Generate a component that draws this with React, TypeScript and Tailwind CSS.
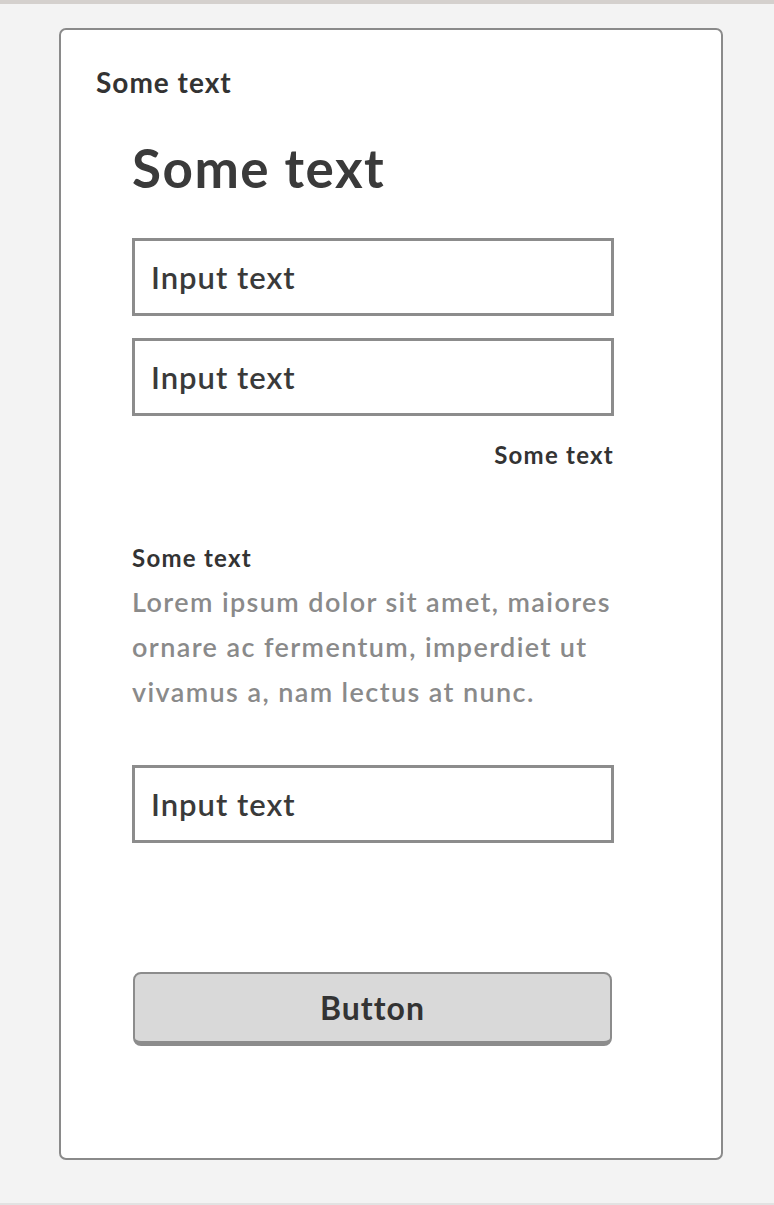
import React from "react";

function InputBox({ className = "" }: { className?: string }) {
  return (
    <div
      className={`h-[78px] w-[482px] border-[3px] border-[#8c8c8c] bg-white flex items-center pl-[16px] ${className}`}
    >
      <span className="text-[31px] font-semibold tracking-[1px] text-[#3a3a3a] leading-none">Input text</span>
    </div>
  );
}

export default function App() {
  return (
    <div className="min-h-[1205px] bg-[#f3f3f3] flex flex-col font-['Lato',sans-serif]">
      <div className="h-[4px] bg-[#d4d0cd]" />
      <div className="pt-[24px] pl-[59px]">
        <div className="w-[664px] h-[1132px] bg-white border-2 border-[#8a8a8a] rounded-[7px] flex flex-col">
          <div className="pl-[35px] pt-[38px] text-[28px] font-bold tracking-[1px] text-[#333333] leading-none">
            Some text
          </div>
          <div className="pl-[71px] flex flex-col">
            <div className="mt-[45px] text-[53px] font-bold tracking-[1.5px] text-[#3a3a3a] leading-none">
              Some text
            </div>
            <InputBox className="mt-[44px]" />
            <InputBox className="mt-[22px]" />
            <div className="w-[482px] text-right mt-[27px] text-[24px] font-bold tracking-[1.25px] text-[#333333] leading-none">
              Some text
            </div>
            <div className="mt-[79px] text-[24px] font-bold tracking-[1.25px] text-[#333333] leading-none">
              Some text
            </div>
            <p className="w-[490px] mt-[9px] text-[27px] font-semibold tracking-[1.4px] text-[#8a8a8a] leading-[45px]">
              Lorem ipsum dolor sit amet, maiores ornare ac fermentum, imperdiet ut vivamus a, nam lectus at nunc.
            </p>
            <InputBox className="mt-[51px]" />
            <button className="mt-[129px] w-[479px] h-[74px] ml-[1px] bg-[#d9d9d9] border-2 border-b-[5px] border-[#8c8c8c] rounded-[8px] text-[32px] font-bold tracking-[1px] text-[#333333] leading-none">
              Button
            </button>
          </div>
        </div>
      </div>
      <div className="mt-auto h-[2px] bg-[#e2e2e2]" />
    </div>
  );
}
